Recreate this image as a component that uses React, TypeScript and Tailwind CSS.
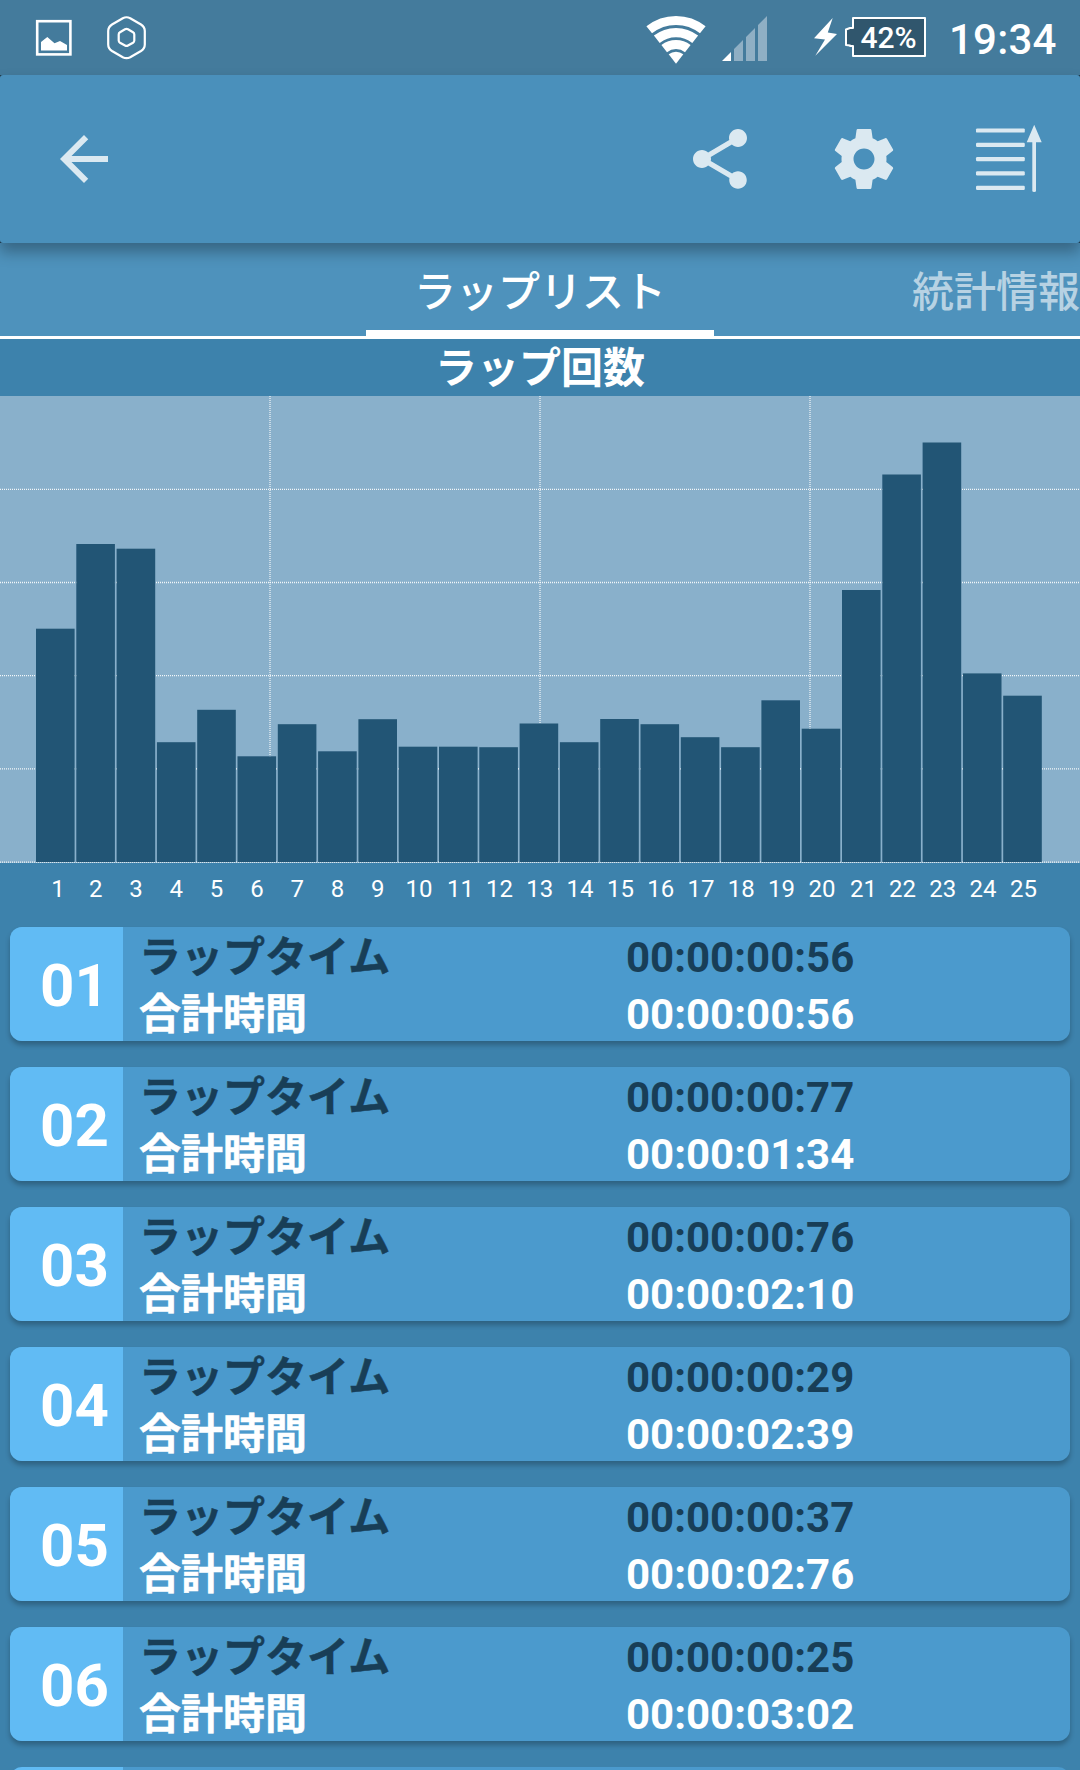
import React from 'react';

interface Lap {
  no: string;
  lap: string;
  total: string;
}

const LAPS: Lap[] = [
  { no: '01', lap: '00:00:00:56', total: '00:00:00:56' },
  { no: '02', lap: '00:00:00:77', total: '00:00:01:34' },
  { no: '03', lap: '00:00:00:76', total: '00:00:02:10' },
  { no: '04', lap: '00:00:00:29', total: '00:00:02:39' },
  { no: '05', lap: '00:00:00:37', total: '00:00:02:76' },
  { no: '06', lap: '00:00:00:25', total: '00:00:03:02' },
];

// Bar heights in px, lap 1 to 25
const BARS = [
  233.3, 318, 313.3, 119.8, 152.2, 105.7, 137.8, 110.7, 142.8, 115.3, 115.3, 114.8, 138.5, 119.8, 143,
  137.8, 124.8, 114.8, 161.7, 133.3, 272, 387.5, 419.5, 188.6, 166.3,
];

const BAR_STEP = 40.3;
const PLOT_BOTTOM = 466;

// The narrow "1" needs a nudge to look centred under its bar
const labelX = (n: number) => {
  const x = 36 + (n - 1) * BAR_STEP;
  if (n === 1) return x + 22;
  if (n < 10) return x + 19.4;
  return n % 10 === 1 ? x + 21.4 : x + 20.2;
};

const StatusBar: React.FC = () => (
  <div className="h-[75px] bg-[#447b9c] flex items-center justify-between text-white">
    <svg width="160" height="75" viewBox="0 0 160 75" fill="none" stroke="#fff">
      <rect x="37.2" y="21.2" width="33.2" height="33.2" strokeWidth="2.6" />
      <path d="M41 50.5V42l6.3-5 7.2 6.3 5.5-2.3 7 4v5.5z" fill="#fff" stroke="none" />
      <path
        d="M122.8 18.2Q126.5 16.3 130.2 18.2L141 24.5Q144.8 27 144.8 31V44.5Q144.8 48.500 141 51L130.2 57.2Q126.5 59.2 122.8 57.2L112 51Q108.2 48.500 108.2 44.500V31Q108.2 27 112 24.500Z"
        strokeWidth="2.2"
      />
      <path
        d="M125 29.3Q126.5 28.5 128 29.3L133 32.2Q134.3 33 134.3 34.5V40.5Q134.3 42 133 42.8L128 45.5Q126.5 46.3 125 45.5L120 42.8Q118.7 42 118.7 40.5V34.5Q118.7 33 120 32.2Z"
        strokeWidth="2.2"
      />
    </svg>

    <div className="flex items-center">
      <svg width="212" height="75" viewBox="640 0 212 75" className="shrink-0">
        {/* Wifi */}
        <g fill="none" stroke="#fff">
          <path d="M649.2 29.85A43 43 0 0 1 702.8 29.85" strokeWidth="9" />
          <path d="M656.8 39.3A30.9 30.9 0 0 1 695.2 39.3" strokeWidth="9.4" />
          <path d="M664.2 48.6A19 19 0 0 1 687.8 48.6" strokeWidth="9" />
        </g>
        <path d="M676 63.7L668.7 54.3A11.8 11.8 0 0 1 683.3 54.3Z" fill="#fff" />
        {/* Signal */}
        <path d="M722 61L731 52V61Z" fill="#fff" />
        <path d="M734 61V49L743 40V61ZM746 61V37L755 28V61ZM758 61V25L767 16V61Z" fill="#8fafc4" />
        {/* Charging */}
        <path d="M832.7 18L814 38.3L825 39.5L815.3 55.8L837 34L827.8 32.5Z" fill="#fff" />
      </svg>
      <div className="relative w-[75px] h-[75px] shrink-0 flex items-center justify-center">
        <svg className="absolute inset-y-0 -left-[8px]" width="83" height="75" viewBox="844 0 83 75">
          <path d="M853 18H925V56H853V46H850V45.5L846 45V29.5L850 28H853Z" fill="#30566d" stroke="#fff" strokeWidth="2" strokeLinejoin="round" />
        </svg>
        <span className="relative left-[-1px] text-[30px] leading-none font-medium">42%</span>
      </div>
      <span className="ml-[22px] mt-[5px] w-[131px] text-[42px] leading-[48px] font-medium tracking-[0.2px]">19:34</span>
    </div>
  </div>
);

const Toolbar: React.FC = () => (
  <div className="bg-[#1c3342] relative z-10 shadow-[0_9px_14px_rgba(0,0,0,0.3)]">
    <div className="h-[168px] rounded-[3px] bg-[#4a90bb] flex items-center justify-between pl-[48px] pr-[32px]">
      <svg width="72" height="72" viewBox="0 0 24 24" fill="#dbe9f1">
        <path d="M20 11H7.830l5.590-5.590L12 4l-8 8 8 8 1.410-1.410L7.830 13H20v-2z" />
      </svg>
      <div className="flex items-center gap-[72px]">
        <svg width="72" height="72" viewBox="0 0 24 24" fill="#dbe9f1">
          <path d="M18 16.080c-.76 0-1.440.3-1.960.77L8.910 12.700c.05-.23.09-.46.09-.7s-.04-.47-.09-.7l7.050-4.110c.54.5 1.250.81 2.040.81 1.660 0 3-1.340 3-3s-1.340-3-3-3-3 1.340-3 3c0 .24.04.47.09.7L8.040 9.810C7.500 9.310 6.790 9 6 9c-1.660 0-3 1.340-3 3s1.340 3 3 3c.79 0 1.500-.31 2.040-.81l7.120 4.160c-.05.21-.08.43-.08.65 0 1.610 1.310 2.920 2.920 2.920 1.610 0 2.920-1.310 2.920-2.920s-1.310-2.920-2.920-2.920z" />
        </svg>
        <svg width="72" height="72" viewBox="0 0 24 24" fill="#dbe9f1">
          <path d="M19.430 12.980c.04-.32.07-.64.07-.98s-.03-.66-.07-.98l2.110-1.650c.19-.15.24-.42.12-.64l-2-3.460c-.12-.22-.39-.3-.61-.22l-2.490 1c-.52-.4-1.080-.73-1.690-.98l-.38-2.650C14.460 2.180 14.250 2 14 2h-4c-.25 0-.46.18-.49.42l-.38 2.650c-.61.25-1.170.59-1.690.98l-2.490-1c-.23-.09-.49 0-.61.22l-2 3.460c-.13.22-.07.49.12.64l2.110 1.650c-.04.32-.07.65-.07.98s.03.66.07.98l-2.110 1.650c-.19.15-.24.42-.12.64l2 3.460c.12.22.39.3.61.22l2.490-1c.52.4 1.080.73 1.690.98l.38 2.650c.03.24.24.42.49.42h4c.25 0 .46-.18.49-.42l.38-2.650c.61-.25 1.170-.59 1.690-.98l2.490 1c.23.09.49 0 .61-.22l2-3.460c.12-.22.07-.49-.12-.64l-2.110-1.650zM12 15.500c-1.930 0-3.500-1.570-3.500-3.500s1.570-3.500 3.500-3.500 3.500 1.570 3.500 3.500-1.570 3.500-3.500 3.500z" />
        </svg>
        <svg width="76" height="72" viewBox="972 123 76 72" fill="#dbe9f1">
          {[130.5, 144.8, 159.1, 173.4, 187.8].map((y) => (
            <rect key={y} x="976" y={y - 2.1} width="48.8" height="4.2" rx="1.2" />
          ))}
          <path d="M1034.2 124.8L1041.7 142.3H1036V191Q1036 192 1034.2 192T1032.3 191V142.3H1026.7Z" />
        </svg>
      </div>
    </div>
  </div>
);

const Tabs: React.FC = () => (
  <div className="h-[96px] bg-[#4e92bc] border-b-[3px] border-white grid grid-cols-[366px_348px_366px] text-[42px] leading-[99px] font-medium whitespace-nowrap">
    <div />
    <div className="h-[93px] border-b-[6px] border-white text-center text-white">ラップリスト</div>
    <div className="h-[93px] text-right text-white/60">統計情報</div>
  </div>
);

const LapChart: React.FC = () => (
  <div>
    <h2 className="h-[57px] text-center text-white text-[42px] leading-[60px] font-bold">ラップ回数</h2>
    <svg width="1080" height="519" viewBox="0 0 1080 519" className="block">
      <rect width="1080" height="467" fill="#89b0cb" />
      <g stroke="#fff" strokeDasharray="1 1">
        {[270, 540, 810].map((x) => (
          <line key={x} x1={x} x2={x} y1="0" y2="466" strokeWidth="2" strokeOpacity="0.55" />
        ))}
        {[93.3, 186.5, 279.6, 372.8, 466.2].map((y) => (
          <line key={y} x1="0" x2="1080" y1={y} y2={y} strokeWidth="1.3" strokeOpacity="0.9" />
        ))}
      </g>
      {BARS.map((h, i) => (
        <rect key={i} x={36 + i * BAR_STEP} y={PLOT_BOTTOM - h} width="38.6" height={h} fill="#225575" />
      ))}
      <g fill="#fff" fontSize="24" textAnchor="middle">
        {BARS.map((_, i) => (
          <text key={i} x={labelX(i + 1)} y="501">
            {i + 1}
          </text>
        ))}
      </g>
    </svg>
  </div>
);

const LapCard: React.FC<{ item: Lap }> = ({ item }) => (
  <div className="h-[114px] shrink-0 rounded-[12px] bg-[#4b9acd] shadow-[0_4px_5px_rgba(0,0,0,0.25)] flex font-bold">
    <div className="w-[113px] shrink-0 rounded-l-[12px] bg-[#61bbf4] text-white text-[60px] leading-[118px] pl-[30px]">
      {item.no}
    </div>
    <div className="w-[503px] pl-[16px] pt-[2px] text-[42px] leading-[57px] whitespace-nowrap [-webkit-text-stroke:0.5px]">
      <div className="text-[#183e57]">ラップタイム</div>
      <div className="text-white">合計時間</div>
    </div>
    <div className="pt-[2px] text-[42px] leading-[57px] whitespace-nowrap">
      <div className="text-[#183e57]">{item.lap}</div>
      <div className="text-white">{item.total}</div>
    </div>
  </div>
);

export default function App() {
  return (
    <div className="w-[1080px] h-[1770px] overflow-hidden bg-[#3d82ac] font-[Roboto,'Noto_Sans_CJK_JP',sans-serif]">
      <StatusBar />
      <Toolbar />
      <Tabs />
      <LapChart />
      <div className="pt-[12px] px-[10px] flex flex-col gap-[26px]">
        {LAPS.map((item) => (
          <LapCard key={item.no} item={item} />
        ))}
        <div className="h-[114px] shrink-0 rounded-[12px] bg-[#4b9acd] overflow-hidden">
          <div className="w-[113px] h-full bg-[#61bbf4]" />
        </div>
      </div>
    </div>
  );
}
